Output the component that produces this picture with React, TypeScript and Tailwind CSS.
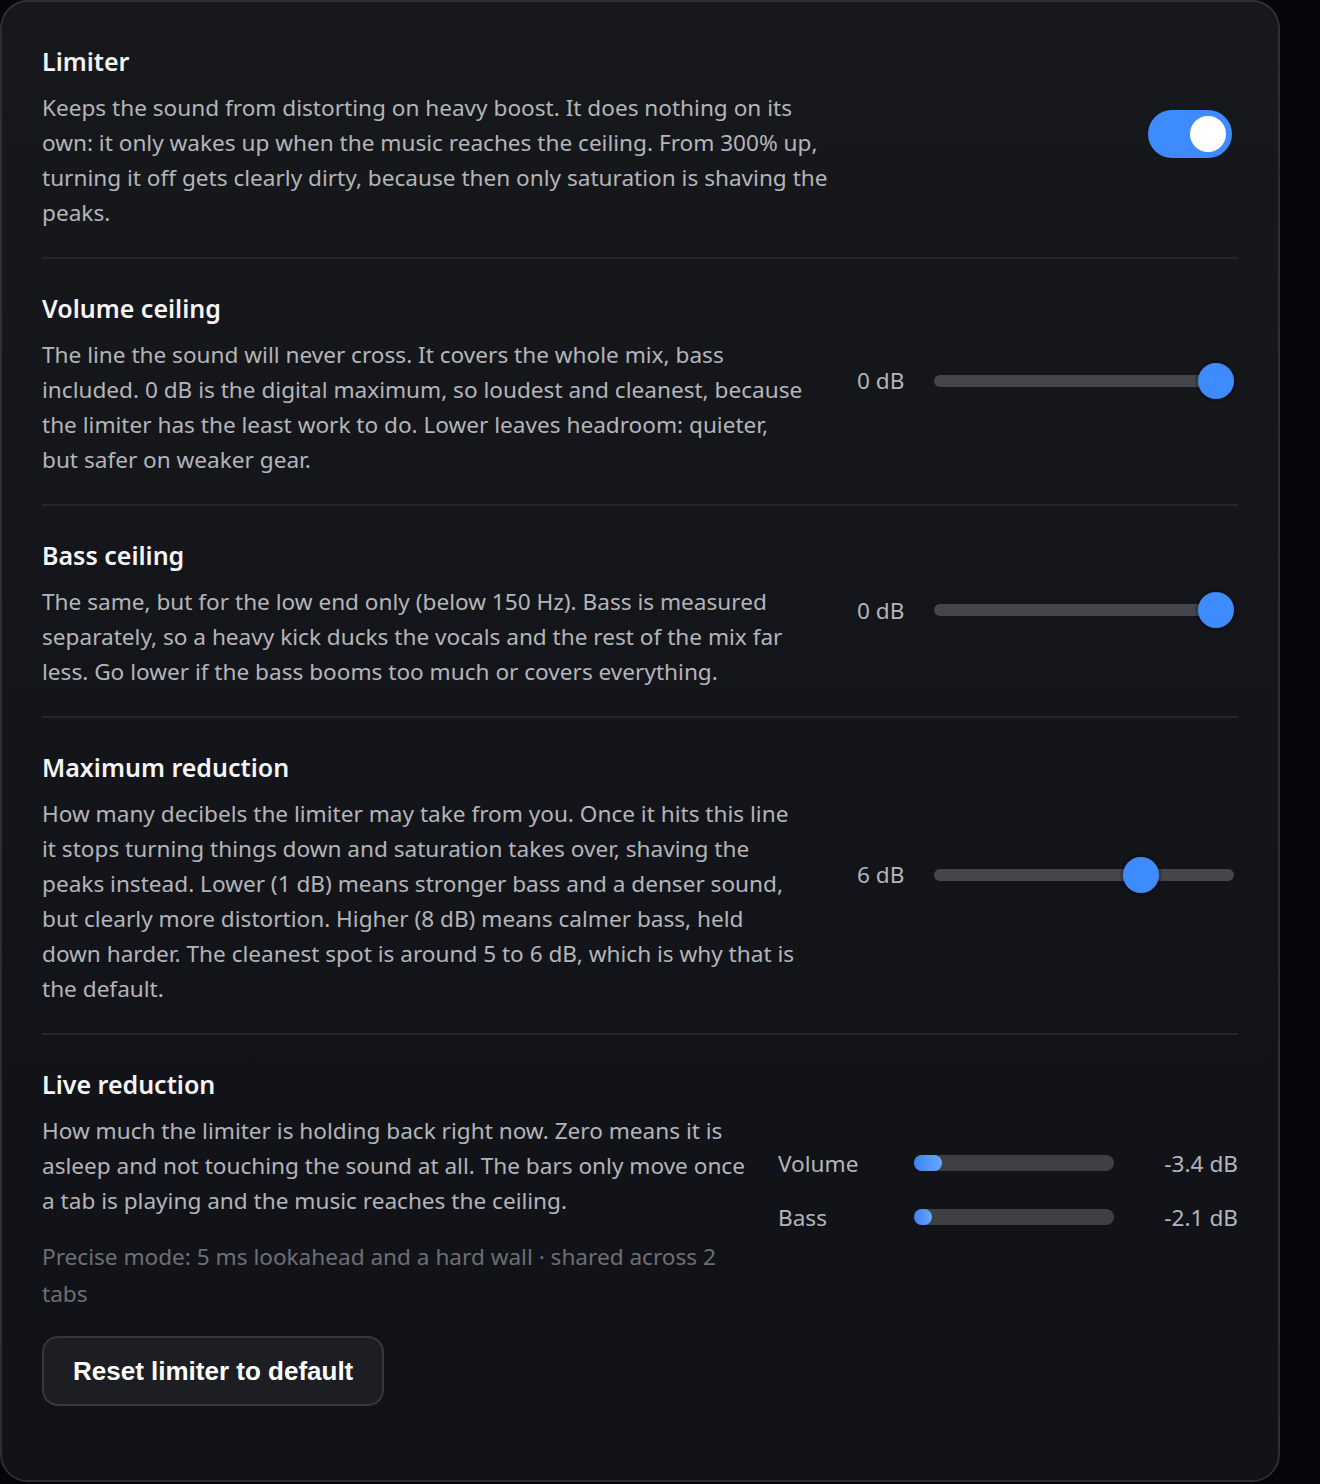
import React from "react";

const body = "text-[22.6px] leading-[35px] text-[#b4b5ba]";

function Slider({ value, min, max }: { value: number; min: number; max: number }) {
  const frac = (value - min) / (max - min);
  return (
    <div className="mb-2 flex w-[381px] shrink-0 items-center">
      <div className={`w-[77px] ${body}`}>{value} dB</div>
      <div className="relative h-3 w-[300px] rounded-full bg-[#45464b]">
        <div
          className="absolute top-1/2 h-9 w-9 -translate-y-1/2 rounded-full bg-[#3d8bfd] shadow-[0_0_0_3px_rgba(0,0,0,0.18)]"
          style={{ left: `${frac * 264}px` }}
        />
      </div>
    </div>
  );
}

function Section({
  title,
  children,
  control,
  width = "w-[760px]",
}: {
  title: string;
  children: React.ReactNode;
  control?: React.ReactNode;
  width?: string;
}) {
  return (
    <div className="pt-[33px] pb-[27px] border-b-2 border-[#25262b]">
      <div className="flex items-center justify-between">
        <div className={`${width} shrink-0`}>
          <h3 className="text-[25px] leading-8 font-semibold text-[#f5f5f7]">{title}</h3>
          <div className="mt-[13px]">{children}</div>
        </div>
        {control}
      </div>
    </div>
  );
}

function Meter({ label, db }: { label: string; db: number }) {
  const w = Math.max(16, (Math.abs(db) / 24) * 200);
  return (
    <>
      <div className={body}>{label}</div>
      <div className="h-4 w-[200px] rounded-full bg-[#3f4045]">
        <div
          className="h-4 rounded-full bg-gradient-to-r from-[#3b82f6] to-[#6aa8ff]"
          style={{ width: `${w}px` }}
        />
      </div>
      <div className={`${body} text-right`}>{db.toFixed(1)} dB</div>
    </>
  );
}

export default function App() {
  return (
    <div
      className="min-h-[1484px] bg-[#05060a]"
      style={{ fontFamily: '"Noto Sans", sans-serif' }}
    >
      <div className="w-[1280px] rounded-[28px] border-2 border-[#2e2f34] bg-gradient-to-b from-[#17181c] to-[#111218] px-[40px] pt-[10px] pb-[74px]">
        <Section
          title="Limiter"
          width="w-[790px]"
          control={
            <div className="mr-[6px] mb-2 flex h-12 w-[84px] shrink-0 items-center justify-end rounded-full bg-[#3d8bfd] pr-[6px]">
              <div className="h-9 w-9 rounded-full bg-white" />
            </div>
          }
        >
          <p className={body}>
            Keeps the sound from distorting on heavy boost. It does nothing on its own: it only wakes up
            when the music reaches the ceiling. From 300% up, turning it off gets clearly dirty, because
            then only saturation is shaving the peaks.
          </p>
        </Section>

        <Section title="Volume ceiling" width="w-[766px]" control={<Slider value={0} min={-6} max={0} />}>
          <p className={body}>
            The line the sound will never cross. It covers the whole mix, bass included. 0 dB is the
            digital maximum, so loudest and cleanest, because the limiter has the least work to do. Lower
            leaves headroom: quieter, but safer on weaker gear.
          </p>
        </Section>

        <Section title="Bass ceiling" control={<Slider value={0} min={-6} max={0} />}>
          <p className={body}>
            The same, but for the low end only (below 150 Hz). Bass is measured separately, so a heavy
            kick ducks the vocals and the rest of the mix far less. Go lower if the bass booms too much or
            covers everything.
          </p>
        </Section>

        <Section title="Maximum reduction" control={<Slider value={6} min={1} max={8} />}>
          <p className={body}>
            How many decibels the limiter may take from you. Once it hits this line it stops turning
            things down and saturation takes over, shaving the peaks instead. Lower (1 dB) means stronger
            bass and a denser sound, but clearly more distortion. Higher (8 dB) means calmer bass, held
            down harder. The cleanest spot is around 5 to 6 dB, which is why that is the default.
          </p>
        </Section>

        <div className="pt-[33px]">
          <div className="flex items-center justify-between gap-6">
            <div className="w-[712px] shrink-0">
              <h3 className="text-[25px] leading-8 font-semibold text-[#f5f5f7]">Live reduction</h3>
              <p className={`mt-[13px] ${body}`}>
                How much the limiter is holding back right now. Zero means it is asleep and not touching the
                sound at all. The bars only move once a tab is playing and the music reaches the ceiling.
              </p>
              <p className="mt-5 text-[22.6px] leading-[37px] text-[#6d6f75]">
                Precise mode: 5 ms lookahead and a hard wall · shared across 2 tabs
              </p>
            </div>
            <div className="grid w-[460px] grid-cols-[136px_200px_1fr] items-center gap-y-[19px]">
              <Meter label="Volume" db={-3.4} />
              <Meter label="Bass" db={-2.1} />
            </div>
          </div>
          <button
            className="mt-6 h-[70px] rounded-2xl border-2 border-[#37383d] bg-[#1d1e23] px-[29px] text-[26px] font-bold text-white"
            style={{ fontFamily: '"Liberation Sans", Arial, sans-serif' }}
          >
            Reset limiter to default
          </button>
        </div>
      </div>
    </div>
  );
}
